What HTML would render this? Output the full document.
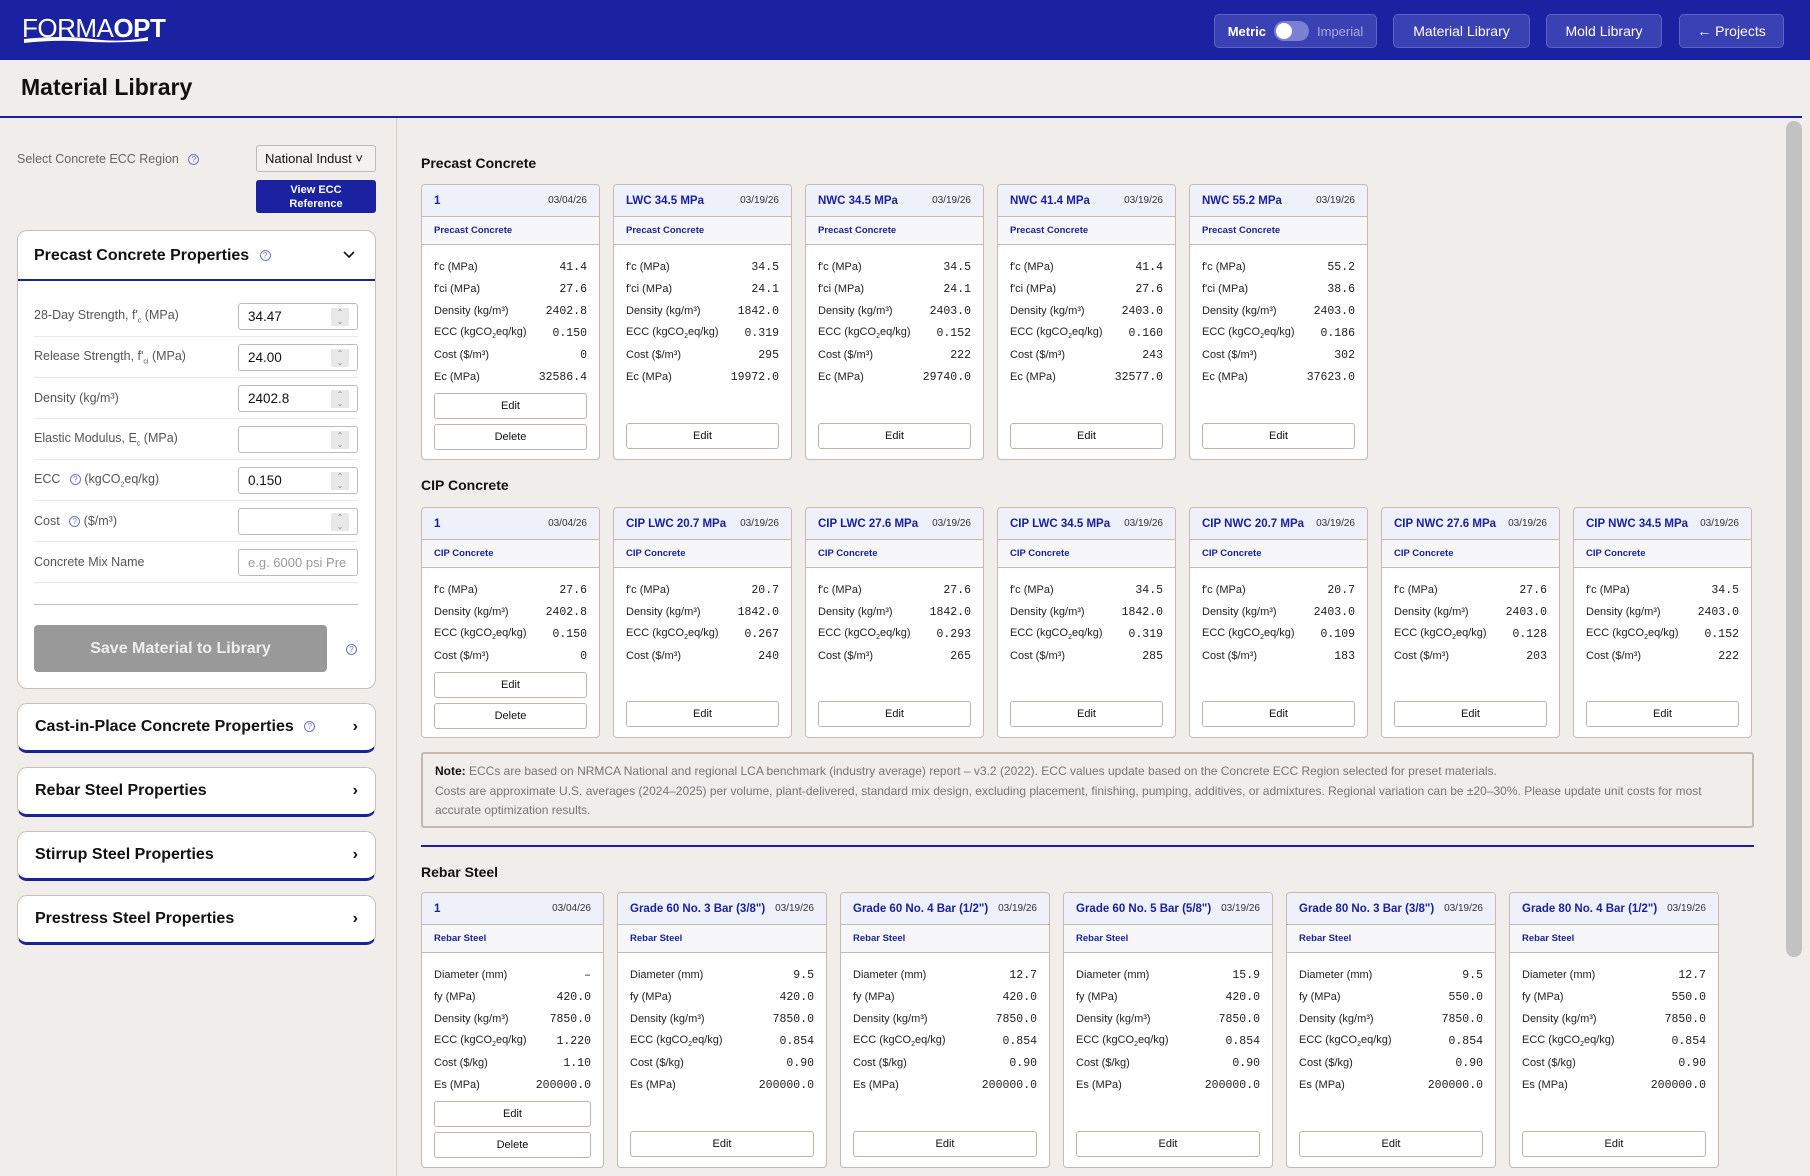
<!DOCTYPE html>
<html><head><meta charset="utf-8"><style>
*{box-sizing:border-box;margin:0;padding:0}
body{width:1810px;height:1176px;overflow:hidden;background:#f0edea;font-family:"Liberation Sans",sans-serif;color:#111;position:relative}
.abs{position:absolute}
.top{left:0;top:0;width:1810px;height:60px;background:#1a22a2}
.logo{left:22px;top:13px;color:#fff;font-size:26px;letter-spacing:-0.5px;font-weight:300}
.logo b{font-weight:bold}
.nbtn{top:14px;height:34px;border:1px solid #5d64c4;border-radius:5px;background:#3a41b3;color:#fff;font-size:14px;display:flex;align-items:center;justify-content:center}
.title{left:21px;top:74px;font-size:23px;font-weight:bold}
.blue{background:#1a22a2}
.lbl{font-size:12.5px;color:#666}
.q{display:inline-block;width:11px;height:11px;border:1px solid #6c73d6;border-radius:50%;color:#6c73d6;font-size:8px;line-height:9px;text-align:center;vertical-align:middle;margin-left:6px;font-weight:normal}
.panel{background:#fff;border:1px solid #c9bfb8;border-radius:10px}
.row{position:absolute;left:34px;width:324px;height:41px;border-bottom:1px solid #ece8e6;display:flex;align-items:center;justify-content:space-between;font-size:12.5px;color:#555}
.inp{width:120px;height:27px;border:1px solid #bbb;border-radius:3px;font-size:13.5px;color:#111;padding-left:9px;display:flex;align-items:center;position:relative;background:#fff}
.inp i{position:absolute;right:8px;top:4px;width:18px;height:18px;background:#e8e8e8;font-style:normal;font-size:8px;color:#888;text-align:center;line-height:9px}
.acc{position:absolute;left:17px;width:359px;height:50px;background:#fff;border:1px solid #c9bfb8;border-bottom:3px solid #1a22a2;border-radius:10px;display:flex;align-items:center;justify-content:space-between;padding:0 17px;font-size:16px;font-weight:bold}
.sec{font-size:14px;font-weight:bold;left:421px}
.cards{position:absolute;left:421px;display:flex}
.card{background:#fff;border:1px solid #c9b9b0;border-radius:4px;display:flex;flex-direction:column;overflow:hidden;margin-right:13px}
.ch{height:32px;background:#eef0fa;border-bottom:1px solid #c9b9b0;display:flex;justify-content:space-between;align-items:center;padding:0 12px;flex:none}
.ch b{color:#1a22a2;font-size:11.5px;white-space:nowrap}
.ch span{font-size:10px;color:#333}
.cs{height:28px;background:#f7f7fa;border-bottom:1px solid #c9b9b0;color:#1a22a2;font-size:9.5px;font-weight:bold;padding:0 12px;display:flex;align-items:center;flex:none}
.cb{padding:11px 12px 10px;flex:1;display:flex;flex-direction:column}
.r{height:22px;display:flex;justify-content:space-between;align-items:center;font-size:11px;color:#222}
.r span:last-child{font-family:"Liberation Mono",monospace;font-size:11.5px}
.bt{height:26px;border:1px solid #c0b4ac;border-radius:3px;font-size:11px;display:flex;align-items:center;justify-content:center;color:#111;margin-top:5px;flex:none}
.sp{flex:1}
sub{font-size:7px}
</style></head><body>
<div class="abs top"></div>
<div class="abs logo">FORMA<b>OPT</b></div>
<svg class="abs" style="left:23px;top:35px" width="126" height="9"><path d="M1 4 Q40 0 70 4 T125 2 L125 6 Q95 8 70 7 Q35 4 1 8Z" fill="#fff"/></svg>
<div class="abs nbtn" style="left:1214px;width:163px;font-size:13px"><b>Metric</b><span style="display:inline-block;width:35px;height:20px;border-radius:10px;background:#7c80d4;margin:0 8px;position:relative"><span style="position:absolute;left:2px;top:2px;width:16px;height:16px;border-radius:50%;background:#fff"></span></span><span style="color:#a9acdf">Imperial</span></div>
<div class="abs nbtn" style="left:1393px;width:137px">Material Library</div>
<div class="abs nbtn" style="left:1546px;width:116px">Mold Library</div>
<div class="abs nbtn" style="left:1679px;width:105px">← Projects</div>
<div class="abs title">Material Library</div>
<div class="abs blue" style="left:0;top:116px;width:1802px;height:2px"></div>
<div class="abs" style="left:396px;top:118px;width:1px;height:1058px;background:#d8d0ca"></div>
<div class="abs" style="left:1786px;top:121px;width:16px;height:836px;border-radius:8px;background:#c2c2c2"></div>

<div class="abs lbl" style="left:17px;top:152px">Select Concrete ECC Region <span class="q">?</span></div>
<div class="abs" style="left:256px;top:145px;width:120px;height:27px;border:1px solid #bbb;border-radius:3px;background:#f4f2f0;font-size:13px;padding:5px 8px">National Indust ˅</div>
<div class="abs blue" style="left:256px;top:180px;width:120px;height:33px;border-radius:3px;color:#fff;font-size:11px;text-align:center;line-height:14px;padding-top:3px;font-weight:bold">View ECC<br>Reference</div>

<div class="abs panel" style="left:17px;top:230px;width:359px;height:459px"></div>
<div class="abs" style="left:34px;top:247px;font-size:16px;font-weight:bold">Precast Concrete Properties <span class="q">?</span></div>
<svg class="abs" style="left:342px;top:250px" width="14" height="10"><path d="M2 2 L7 7 L12 2" stroke="#111" stroke-width="1.6" fill="none"/></svg>
<div class="abs blue" style="left:18px;top:279px;width:357px;height:2px"></div>
<div class="row" style="top:296px"><span>28-Day Strength, f'<sub>c</sub> (MPa)</span><div class="inp">34.47<i>⌃<br>⌄</i></div></div>
<div class="row" style="top:337px"><span>Release Strength, f'<sub>ci</sub> (MPa)</span><div class="inp">24.00<i>⌃<br>⌄</i></div></div>
<div class="row" style="top:378px"><span>Density (kg/m³)</span><div class="inp">2402.8<i>⌃<br>⌄</i></div></div>
<div class="row" style="top:419px"><span>Elastic Modulus, E<sub>c</sub> (MPa)</span><div class="inp"><i>⌃<br>⌄</i></div></div>
<div class="row" style="top:460px"><span>ECC <span class="q">?</span> (kgCO<sub>2</sub>eq/kg)</span><div class="inp">0.150<i>⌃<br>⌄</i></div></div>
<div class="row" style="top:501px"><span>Cost <span class="q">?</span> ($/m³)</span><div class="inp"><i>⌃<br>⌄</i></div></div>
<div class="row" style="top:542px"><span>Concrete Mix Name</span><div class="inp" style="color:#999;font-size:13px;overflow:hidden;white-space:nowrap">e.g. 6000 psi Pre</div></div>
<div class="abs" style="left:34px;top:604px;width:324px;height:1px;background:#c9bfb8"></div>
<div class="abs" style="left:34px;top:625px;width:293px;height:47px;background:#999;border-radius:4px;color:#eee;font-size:16px;font-weight:bold;display:flex;align-items:center;justify-content:center">Save Material to Library</div>
<span class="abs q" style="left:340px;top:644px">?</span>
<div class="acc" style="top:703px"><span>Cast-in-Place Concrete Properties <span class="q">?</span></span><span>›</span></div>
<div class="acc" style="top:767px"><span>Rebar Steel Properties</span><span>›</span></div>
<div class="acc" style="top:831px"><span>Stirrup Steel Properties</span><span>›</span></div>
<div class="acc" style="top:895px"><span>Prestress Steel Properties</span><span>›</span></div>

<div class="abs sec" style="top:155px">Precast Concrete</div>
<div class="cards" style="top:184px">
<div class="card" style="width:179px;height:276px"><div class="ch"><b>1</b><span>03/04/26</span></div><div class="cs">Precast Concrete</div><div class="cb"><div class="r"><span>f'c (MPa)</span><span>41.4</span></div><div class="r"><span>f'ci (MPa)</span><span>27.6</span></div><div class="r"><span>Density (kg/m³)</span><span>2402.8</span></div><div class="r"><span>ECC (kgCO<sub>2</sub>eq/kg)</span><span>0.150</span></div><div class="r"><span>Cost ($/m³)</span><span>0</span></div><div class="r"><span>Ec (MPa)</span><span>32586.4</span></div><div class="sp"></div><div class="bt">Edit</div><div class="bt">Delete</div></div></div>
<div class="card" style="width:179px;height:276px"><div class="ch"><b>LWC 34.5 MPa</b><span>03/19/26</span></div><div class="cs">Precast Concrete</div><div class="cb"><div class="r"><span>f'c (MPa)</span><span>34.5</span></div><div class="r"><span>f'ci (MPa)</span><span>24.1</span></div><div class="r"><span>Density (kg/m³)</span><span>1842.0</span></div><div class="r"><span>ECC (kgCO<sub>2</sub>eq/kg)</span><span>0.319</span></div><div class="r"><span>Cost ($/m³)</span><span>295</span></div><div class="r"><span>Ec (MPa)</span><span>19972.0</span></div><div class="sp"></div><div class="bt">Edit</div></div></div>
<div class="card" style="width:179px;height:276px"><div class="ch"><b>NWC 34.5 MPa</b><span>03/19/26</span></div><div class="cs">Precast Concrete</div><div class="cb"><div class="r"><span>f'c (MPa)</span><span>34.5</span></div><div class="r"><span>f'ci (MPa)</span><span>24.1</span></div><div class="r"><span>Density (kg/m³)</span><span>2403.0</span></div><div class="r"><span>ECC (kgCO<sub>2</sub>eq/kg)</span><span>0.152</span></div><div class="r"><span>Cost ($/m³)</span><span>222</span></div><div class="r"><span>Ec (MPa)</span><span>29740.0</span></div><div class="sp"></div><div class="bt">Edit</div></div></div>
<div class="card" style="width:179px;height:276px"><div class="ch"><b>NWC 41.4 MPa</b><span>03/19/26</span></div><div class="cs">Precast Concrete</div><div class="cb"><div class="r"><span>f'c (MPa)</span><span>41.4</span></div><div class="r"><span>f'ci (MPa)</span><span>27.6</span></div><div class="r"><span>Density (kg/m³)</span><span>2403.0</span></div><div class="r"><span>ECC (kgCO<sub>2</sub>eq/kg)</span><span>0.160</span></div><div class="r"><span>Cost ($/m³)</span><span>243</span></div><div class="r"><span>Ec (MPa)</span><span>32577.0</span></div><div class="sp"></div><div class="bt">Edit</div></div></div>
<div class="card" style="width:179px;height:276px"><div class="ch"><b>NWC 55.2 MPa</b><span>03/19/26</span></div><div class="cs">Precast Concrete</div><div class="cb"><div class="r"><span>f'c (MPa)</span><span>55.2</span></div><div class="r"><span>f'ci (MPa)</span><span>38.6</span></div><div class="r"><span>Density (kg/m³)</span><span>2403.0</span></div><div class="r"><span>ECC (kgCO<sub>2</sub>eq/kg)</span><span>0.186</span></div><div class="r"><span>Cost ($/m³)</span><span>302</span></div><div class="r"><span>Ec (MPa)</span><span>37623.0</span></div><div class="sp"></div><div class="bt">Edit</div></div></div>
</div>

<div class="abs sec" style="top:477px">CIP Concrete</div>
<div class="cards" style="top:507px">
<div class="card" style="width:179px;height:231px"><div class="ch"><b>1</b><span>03/04/26</span></div><div class="cs">CIP Concrete</div><div class="cb"><div class="r"><span>f'c (MPa)</span><span>27.6</span></div><div class="r"><span>Density (kg/m³)</span><span>2402.8</span></div><div class="r"><span>ECC (kgCO<sub>2</sub>eq/kg)</span><span>0.150</span></div><div class="r"><span>Cost ($/m³)</span><span>0</span></div><div class="sp"></div><div class="bt">Edit</div><div class="bt">Delete</div></div></div>
<div class="card" style="width:179px;height:231px"><div class="ch"><b>CIP LWC 20.7 MPa</b><span>03/19/26</span></div><div class="cs">CIP Concrete</div><div class="cb"><div class="r"><span>f'c (MPa)</span><span>20.7</span></div><div class="r"><span>Density (kg/m³)</span><span>1842.0</span></div><div class="r"><span>ECC (kgCO<sub>2</sub>eq/kg)</span><span>0.267</span></div><div class="r"><span>Cost ($/m³)</span><span>240</span></div><div class="sp"></div><div class="bt">Edit</div></div></div>
<div class="card" style="width:179px;height:231px"><div class="ch"><b>CIP LWC 27.6 MPa</b><span>03/19/26</span></div><div class="cs">CIP Concrete</div><div class="cb"><div class="r"><span>f'c (MPa)</span><span>27.6</span></div><div class="r"><span>Density (kg/m³)</span><span>1842.0</span></div><div class="r"><span>ECC (kgCO<sub>2</sub>eq/kg)</span><span>0.293</span></div><div class="r"><span>Cost ($/m³)</span><span>265</span></div><div class="sp"></div><div class="bt">Edit</div></div></div>
<div class="card" style="width:179px;height:231px"><div class="ch"><b>CIP LWC 34.5 MPa</b><span>03/19/26</span></div><div class="cs">CIP Concrete</div><div class="cb"><div class="r"><span>f'c (MPa)</span><span>34.5</span></div><div class="r"><span>Density (kg/m³)</span><span>1842.0</span></div><div class="r"><span>ECC (kgCO<sub>2</sub>eq/kg)</span><span>0.319</span></div><div class="r"><span>Cost ($/m³)</span><span>285</span></div><div class="sp"></div><div class="bt">Edit</div></div></div>
<div class="card" style="width:179px;height:231px"><div class="ch"><b>CIP NWC 20.7 MPa</b><span>03/19/26</span></div><div class="cs">CIP Concrete</div><div class="cb"><div class="r"><span>f'c (MPa)</span><span>20.7</span></div><div class="r"><span>Density (kg/m³)</span><span>2403.0</span></div><div class="r"><span>ECC (kgCO<sub>2</sub>eq/kg)</span><span>0.109</span></div><div class="r"><span>Cost ($/m³)</span><span>183</span></div><div class="sp"></div><div class="bt">Edit</div></div></div>
<div class="card" style="width:179px;height:231px"><div class="ch"><b>CIP NWC 27.6 MPa</b><span>03/19/26</span></div><div class="cs">CIP Concrete</div><div class="cb"><div class="r"><span>f'c (MPa)</span><span>27.6</span></div><div class="r"><span>Density (kg/m³)</span><span>2403.0</span></div><div class="r"><span>ECC (kgCO<sub>2</sub>eq/kg)</span><span>0.128</span></div><div class="r"><span>Cost ($/m³)</span><span>203</span></div><div class="sp"></div><div class="bt">Edit</div></div></div>
<div class="card" style="width:179px;height:231px;margin-right:0"><div class="ch"><b>CIP NWC 34.5 MPa</b><span>03/19/26</span></div><div class="cs">CIP Concrete</div><div class="cb"><div class="r"><span>f'c (MPa)</span><span>34.5</span></div><div class="r"><span>Density (kg/m³)</span><span>2403.0</span></div><div class="r"><span>ECC (kgCO<sub>2</sub>eq/kg)</span><span>0.152</span></div><div class="r"><span>Cost ($/m³)</span><span>222</span></div><div class="sp"></div><div class="bt">Edit</div></div></div>
</div>

<div class="abs" style="left:421px;top:752px;width:1333px;height:76px;border:2px solid #c4b8b0;border-radius:3px;padding:8px 12px;font-size:12px;line-height:19.5px;color:#777"><b style="color:#111">Note:</b> ECCs are based on NRMCA National and regional LCA benchmark (industry average) report – v3.2 (2022). ECC values update based on the Concrete ECC Region selected for preset materials.<br>Costs are approximate U.S. averages (2024–2025) per volume, plant-delivered, standard mix design, excluding placement, finishing, pumping, additives, or admixtures. Regional variation can be ±20–30%. Please update unit costs for most<br>accurate optimization results.</div>
<div class="abs blue" style="left:421px;top:845px;width:1333px;height:2px"></div>

<div class="abs sec" style="top:864px">Rebar Steel</div>
<div class="cards" style="top:892px">
<div class="card" style="width:183px;height:276px;margin-right:13px"><div class="ch"><b>1</b><span>03/04/26</span></div><div class="cs">Rebar Steel</div><div class="cb"><div class="r"><span>Diameter (mm)</span><span>–</span></div><div class="r"><span>fy (MPa)</span><span>420.0</span></div><div class="r"><span>Density (kg/m³)</span><span>7850.0</span></div><div class="r"><span>ECC (kgCO<sub>2</sub>eq/kg)</span><span>1.220</span></div><div class="r"><span>Cost ($/kg)</span><span>1.10</span></div><div class="r"><span>Es (MPa)</span><span>200000.0</span></div><div class="sp"></div><div class="bt">Edit</div><div class="bt">Delete</div></div></div>
<div class="card" style="width:210px;height:276px"><div class="ch"><b>Grade 60 No. 3 Bar (3/8")</b><span>03/19/26</span></div><div class="cs">Rebar Steel</div><div class="cb"><div class="r"><span>Diameter (mm)</span><span>9.5</span></div><div class="r"><span>fy (MPa)</span><span>420.0</span></div><div class="r"><span>Density (kg/m³)</span><span>7850.0</span></div><div class="r"><span>ECC (kgCO<sub>2</sub>eq/kg)</span><span>0.854</span></div><div class="r"><span>Cost ($/kg)</span><span>0.90</span></div><div class="r"><span>Es (MPa)</span><span>200000.0</span></div><div class="sp"></div><div class="bt">Edit</div></div></div>
<div class="card" style="width:210px;height:276px"><div class="ch"><b>Grade 60 No. 4 Bar (1/2")</b><span>03/19/26</span></div><div class="cs">Rebar Steel</div><div class="cb"><div class="r"><span>Diameter (mm)</span><span>12.7</span></div><div class="r"><span>fy (MPa)</span><span>420.0</span></div><div class="r"><span>Density (kg/m³)</span><span>7850.0</span></div><div class="r"><span>ECC (kgCO<sub>2</sub>eq/kg)</span><span>0.854</span></div><div class="r"><span>Cost ($/kg)</span><span>0.90</span></div><div class="r"><span>Es (MPa)</span><span>200000.0</span></div><div class="sp"></div><div class="bt">Edit</div></div></div>
<div class="card" style="width:210px;height:276px"><div class="ch"><b>Grade 60 No. 5 Bar (5/8")</b><span>03/19/26</span></div><div class="cs">Rebar Steel</div><div class="cb"><div class="r"><span>Diameter (mm)</span><span>15.9</span></div><div class="r"><span>fy (MPa)</span><span>420.0</span></div><div class="r"><span>Density (kg/m³)</span><span>7850.0</span></div><div class="r"><span>ECC (kgCO<sub>2</sub>eq/kg)</span><span>0.854</span></div><div class="r"><span>Cost ($/kg)</span><span>0.90</span></div><div class="r"><span>Es (MPa)</span><span>200000.0</span></div><div class="sp"></div><div class="bt">Edit</div></div></div>
<div class="card" style="width:210px;height:276px"><div class="ch"><b>Grade 80 No. 3 Bar (3/8")</b><span>03/19/26</span></div><div class="cs">Rebar Steel</div><div class="cb"><div class="r"><span>Diameter (mm)</span><span>9.5</span></div><div class="r"><span>fy (MPa)</span><span>550.0</span></div><div class="r"><span>Density (kg/m³)</span><span>7850.0</span></div><div class="r"><span>ECC (kgCO<sub>2</sub>eq/kg)</span><span>0.854</span></div><div class="r"><span>Cost ($/kg)</span><span>0.90</span></div><div class="r"><span>Es (MPa)</span><span>200000.0</span></div><div class="sp"></div><div class="bt">Edit</div></div></div>
<div class="card" style="width:210px;height:276px"><div class="ch"><b>Grade 80 No. 4 Bar (1/2")</b><span>03/19/26</span></div><div class="cs">Rebar Steel</div><div class="cb"><div class="r"><span>Diameter (mm)</span><span>12.7</span></div><div class="r"><span>fy (MPa)</span><span>550.0</span></div><div class="r"><span>Density (kg/m³)</span><span>7850.0</span></div><div class="r"><span>ECC (kgCO<sub>2</sub>eq/kg)</span><span>0.854</span></div><div class="r"><span>Cost ($/kg)</span><span>0.90</span></div><div class="r"><span>Es (MPa)</span><span>200000.0</span></div><div class="sp"></div><div class="bt">Edit</div></div></div>
</div>
</body></html>
